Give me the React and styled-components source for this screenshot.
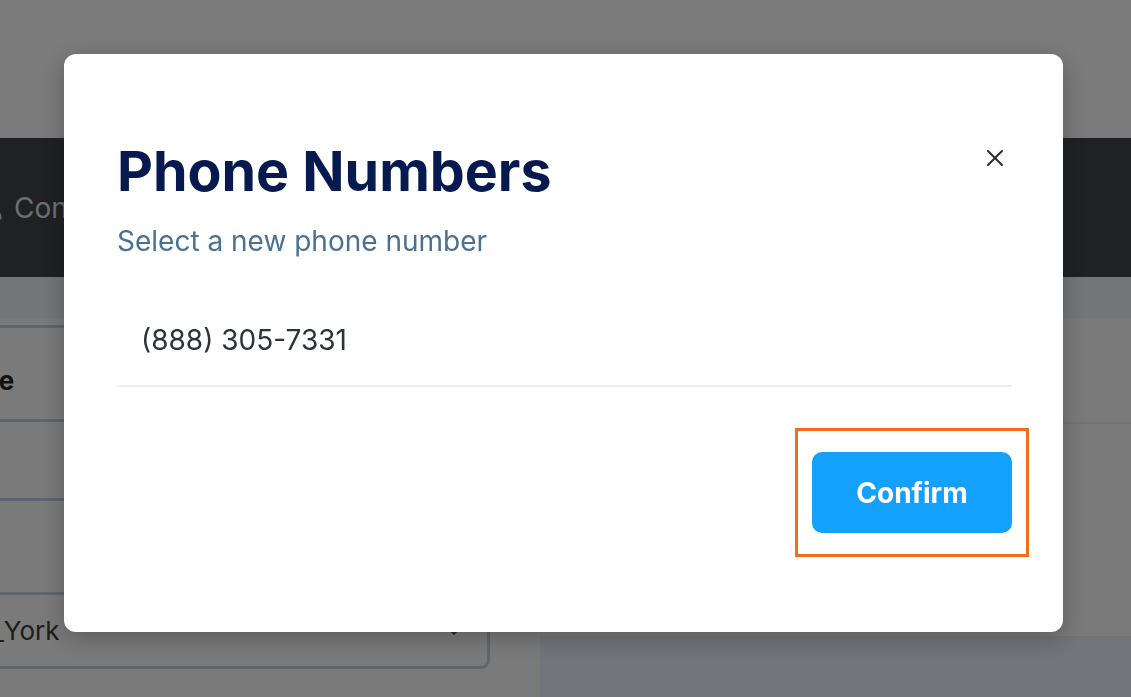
import React from "react";
import styled, { createGlobalStyle } from "styled-components";
import { User, ChevronDown } from "lucide-react";

const GlobalStyle = createGlobalStyle`
  html, body {
    margin: 0;
    padding: 0;
    overflow: hidden;
  }
  body {
    font-family: Inter, "Noto Sans", "Liberation Sans", sans-serif;
    background: #f6f6f6;
  }
  * {
    box-sizing: border-box;
  }
`;

const Page = styled.div`
  width: 1131px;
  height: 697px;
  display: flex;
  flex-direction: column;
  background: #f6f6f6;
`;

const TopArea = styled.div`
  height: 138px;
  flex: none;
  background: #f6f6f6;
`;

const Header = styled.div`
  height: 139px;
  flex: none;
  background: #3e4248;
  display: flex;
  align-items: center;
  gap: 8px;
  color: #d6dce4;
  font-size: 28px;
  svg {
    margin-left: -22px;
  }
`;

const Strip = styled.div`
  height: 41px;
  flex: none;
  background: #e6ebf0;
`;

const Body = styled.div`
  flex: 1;
  display: flex;
  gap: 50px;
  background: #f4f4f4;
`;

const LeftPanel = styled.div`
  width: 490px;
  display: flex;
  flex-direction: column;
  padding-top: 7px;
`;

const FormRow = styled.div`
  height: ${(p) => p.h}px;
  border-top: 3px solid #b8cce0;
  display: flex;
  align-items: center;
  padding-top: 14px;
  font-size: 26px;
  font-weight: 700;
  color: #222;
  overflow: hidden;
  span {
    margin-left: -60px;
  }
`;

const Select = styled.div`
  height: 77px;
  border: 3px solid #bccede;
  border-left: none;
  border-radius: 0 9px 9px 0;
  display: flex;
  align-items: center;
  justify-content: space-between;
  padding-right: 22px;
  font-size: 26px;
  color: #3a3a3a;
  span {
    margin-left: -8px;
  }
`;

const RightPanel = styled.div`
  flex: 1;
  display: flex;
  flex-direction: column;
  background: #e2eaf2;
`;

const RightRow = styled.div`
  height: ${(p) => p.h}px;
  background: #f4f4f4;
  border-bottom: 2px solid #e6e6e6;
`;

const Overlay = styled.div`
  position: fixed;
  inset: 0;
  background: rgba(0, 0, 0, 0.5);
  display: flex;
  align-items: flex-start;
  padding: 54px 0 0 64px;
`;

const Modal = styled.div`
  width: 999px;
  height: 578px;
  background: #ffffff;
  border-radius: 12px;
  box-shadow: 0 6px 24px rgba(0, 0, 0, 0.25);
  padding: 84px 51px 0 53px;
  display: flex;
  flex-direction: column;
`;

const ModalHeader = styled.div`
  display: flex;
  justify-content: space-between;
  align-items: flex-start;
`;

const Title = styled.h2`
  margin: 0;
  font-size: 55.5px;
  line-height: 66px;
  font-weight: 700;
  color: #061a4f;
`;

const CloseButton = styled.button`
  border: none;
  background: none;
  padding: 0;
  margin: 12px 9px 0 0;
  width: 16px;
  height: 16px;
  display: flex;
  cursor: pointer;
`;

const Subtitle = styled.p`
  margin: 20px 0 0;
  font-size: 28px;
  line-height: 34px;
  color: #4a7191;
`;

const NumberRow = styled.div`
  margin-top: 37px;
  padding: 28px 24px;
  border-bottom: 2px solid #eceef0;
  font-size: 28px;
  line-height: 34px;
  color: #2a333e;
`;

const Actions = styled.div`
  margin-top: 65px;
  display: flex;
  justify-content: flex-end;
`;

const Highlight = styled.div`
  position: relative;
  &::after {
    content: "";
    position: absolute;
    inset: -24px -17px;
    border: 3px solid #f07115;
    pointer-events: none;
  }
`;

const ConfirmButton = styled.button`
  width: 200px;
  height: 81px;
  border: none;
  border-radius: 10px;
  background: #13a1fd;
  color: #ffffff;
  font-family: inherit;
  font-size: 28px;
  font-weight: 700;
  cursor: pointer;
`;

export default function App() {
  return (
    <>
      <GlobalStyle />
      <Page>
        <TopArea />
        <Header>
          <User size={28} strokeWidth={2} />
          <span>Contacts</span>
        </Header>
        <Strip />
        <Body>
          <LeftPanel>
            <FormRow h={94}>
              <span>Name</span>
            </FormRow>
            <FormRow h={79} />
            <FormRow h={94} />
            <Select>
              <span>_York</span>
              <ChevronDown size={22} color="#555" />
            </Select>
          </LeftPanel>
          <RightPanel>
            <RightRow h={106} />
            <RightRow h={214} />
          </RightPanel>
        </Body>
      </Page>
      <Overlay>
        <Modal>
          <ModalHeader>
            <Title>Phone Numbers</Title>
            <CloseButton aria-label="Close">
              <svg width="16" height="16" viewBox="0 0 16 16">
                <path
                  d="M1 1L15 15M15 1L1 15"
                  stroke="#2a2f36"
                  strokeWidth="2"
                  strokeLinecap="round"
                />
              </svg>
            </CloseButton>
          </ModalHeader>
          <Subtitle>Select a new phone number</Subtitle>
          <NumberRow>(888) 305-7331</NumberRow>
          <Actions>
            <Highlight>
              <ConfirmButton>Confirm</ConfirmButton>
            </Highlight>
          </Actions>
        </Modal>
      </Overlay>
    </>
  );
}
